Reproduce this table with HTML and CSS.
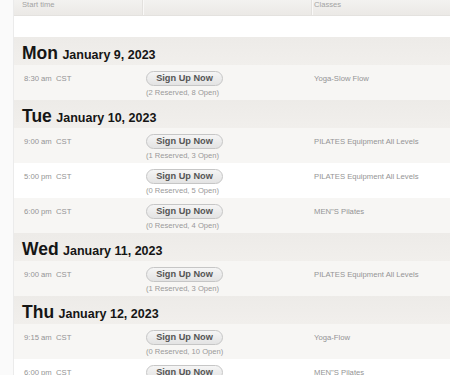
FILE: index.html
```html
<!DOCTYPE html>
<html lang="en">
<head>
<meta charset="utf-8">
<title>Class Schedule</title>
<link rel="stylesheet" href="styles.css">
</head>
<body>
<div class="page">
  <div class="schedule">
    <div class="row head">
      <div class="cell">Start time</div>
      <div class="cell divided"></div>
      <div class="cell divided">Classes</div>
    </div>
    <div class="spacer"></div>

    <div class="day"><span class="dow">Mon</span> <span class="date">January 9, 2023</span></div>
    <div class="row slot">
      <div class="time">8:30 am&nbsp;&nbsp;CST</div>
      <div class="signup"><button class="btn">Sign Up Now</button><div class="spots">(2 Reserved, 8 Open)</div></div>
      <div class="class">Yoga-Slow Flow</div>
    </div>

    <div class="day"><span class="dow">Tue</span> <span class="date">January 10, 2023</span></div>
    <div class="row slot">
      <div class="time">9:00 am&nbsp;&nbsp;CST</div>
      <div class="signup"><button class="btn">Sign Up Now</button><div class="spots">(1 Reserved, 3 Open)</div></div>
      <div class="class">PILATES Equipment All Levels</div>
    </div>
    <div class="row slot">
      <div class="time">5:00 pm&nbsp;&nbsp;CST</div>
      <div class="signup"><button class="btn">Sign Up Now</button><div class="spots">(0 Reserved, 5 Open)</div></div>
      <div class="class">PILATES Equipment All Levels</div>
    </div>
    <div class="row slot">
      <div class="time">6:00 pm&nbsp;&nbsp;CST</div>
      <div class="signup"><button class="btn">Sign Up Now</button><div class="spots">(0 Reserved, 4 Open)</div></div>
      <div class="class">MEN"S Pilates</div>
    </div>

    <div class="day"><span class="dow">Wed</span> <span class="date">January 11, 2023</span></div>
    <div class="row slot">
      <div class="time">9:00 am&nbsp;&nbsp;CST</div>
      <div class="signup"><button class="btn">Sign Up Now</button><div class="spots">(1 Reserved, 3 Open)</div></div>
      <div class="class">PILATES Equipment All Levels</div>
    </div>

    <div class="day"><span class="dow">Thu</span> <span class="date">January 12, 2023</span></div>
    <div class="row slot">
      <div class="time">9:15 am&nbsp;&nbsp;CST</div>
      <div class="signup"><button class="btn">Sign Up Now</button><div class="spots">(0 Reserved, 10 Open)</div></div>
      <div class="class">Yoga-Flow</div>
    </div>
    <div class="row slot">
      <div class="time">6:00 pm&nbsp;&nbsp;CST</div>
      <div class="signup"><button class="btn">Sign Up Now</button><div class="spots">(0 Reserved, 6 Open)</div></div>
      <div class="class">MEN"S Pilates</div>
    </div>
  </div>
</div>
</body>
</html>
```

FILE: styles.css
```css
html, body {
  margin: 0;
  padding: 0;
  overflow: hidden;
}

body {
  background: #fafafa;
  font-family: "Liberation Sans", Arial, Helvetica, sans-serif;
  color: #999;
}

.page {
  padding-left: 13px;
}

.schedule {
  border-left: 1px solid #ebebeb;
  background: #fff;
  width: 440px;
}

/* three columns shared by the header and every time slot */
.row {
  display: grid;
  grid-template-columns: 128px 169px 1fr;
}

.head {
  height: 16px;
  background: linear-gradient(#f3f2f0, #ebe9e6);
  border-bottom: 1px solid #e4e2df;
  box-sizing: border-box;
  font-size: 7.6px;
  line-height: 10px;
  color: #a3a3a3;
}

.head .cell {
  padding-left: 8px;
}

.head .cell:last-child {
  padding-left: 2px;
}

.head .divided {
  border-left: 1px solid #e3e1de;
  box-shadow: inset 1px 0 #f9f8f7;
}

.spacer {
  height: 21px;
  background: #fff;
}

.day {
  height: 28px;
  box-sizing: border-box;
  padding: 6px 0 0 8px;
  line-height: 20px;
  background: linear-gradient(#edebe8, #f1efec);
  color: #151515;
  font-weight: bold;
  white-space: nowrap;
}

.dow {
  font-size: 17.5px;
}

.date {
  font-size: 12.5px;
}

.slot {
  height: 35px;
  box-sizing: border-box;
  padding-top: 6px;
  background: #fff;
}

.day + .slot,
.day + .slot + .slot + .slot {
  background: #f7f6f4;
}

.time {
  padding-left: 10px;
  font-size: 7.7px;
  line-height: 15px;
  color: #949494;
  white-space: nowrap;
}

.signup {
  padding-left: 4px;
}

.btn {
  display: block;
  width: 77px;
  height: 15px;
  margin: 0;
  padding: 0;
  border: 1px solid #c6c6c6;
  border-radius: 8px;
  background: linear-gradient(#f5f5f5, #e3e3e3);
  font-family: "Liberation Sans", Arial, Helvetica, sans-serif;
  font-weight: bold;
  font-size: 9.2px;
  line-height: 13px;
  color: #555;
  text-align: center;
}

.spots {
  margin-top: 1px;
  font-size: 7.6px;
  line-height: 11px;
  color: #999;
  white-space: nowrap;
}

.class {
  padding-left: 3px;
  font-size: 7.7px;
  line-height: 15px;
  color: #949494;
  white-space: nowrap;
}
```
